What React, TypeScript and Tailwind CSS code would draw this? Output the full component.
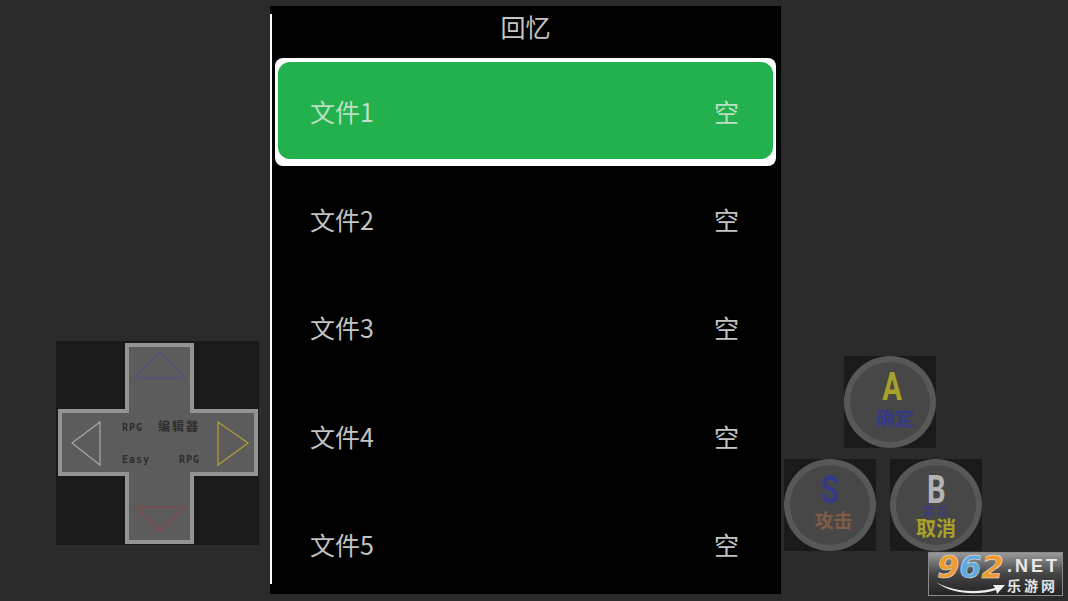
import React from 'react';

const cjk = "font-['Noto_Sans_CJK_SC','Noto_Sans',sans-serif]";

function Row(props: { name: string; selected?: boolean }) {
    if (props.selected) {
        return (
            <div className="h-[108px] shrink-0 ml-[3px] mr-[5px] bg-white rounded-[8px] pt-[4px] pb-[7px] px-[3px] flex">
                <div className="flex-1 bg-[#22b14c] rounded-[12px] flex items-center justify-between pl-[32px] pr-[34px] pt-[2px] text-[25px] text-[#bcdfc5]">
                    <span>{props.name}</span>
                    <span>空</span>
                </div>
            </div>
        );
    }
    return (
        <div className="h-[108.5px] shrink-0 flex items-center justify-between pl-[38px] pr-[42px] pb-[2px] text-[25px] text-[#c4c4c4]">
            <span>{props.name}</span>
            <span>空</span>
        </div>
    );
}

function Dpad() {
    return (
        <svg width="203" height="204" viewBox="0 0 203 204" className="block bg-[#1a1a1a]">
            <path
                d="M71 4 H136 V70 H200 V133 H136 V201 H71 V133 H4 V70 H71 Z"
                fill="#5c5c5c"
                stroke="#949494"
                strokeWidth="4"
            />
            <path d="M79 37 L104 11 L129 37 Z" fill="none" stroke="#4a5080" strokeWidth="1.2" />
            <path d="M80 166 L128 166 L104 190 Z" fill="none" stroke="#8a4044" strokeWidth="1.2" />
            <path d="M44 81 L44 124 L16 102 Z" fill="none" stroke="#a8a8a8" strokeWidth="1.2" />
            <path d="M162 81 L162 124 L192 102 Z" fill="none" stroke="#a89a38" strokeWidth="1.4" />
            <text x="66" y="90" fontFamily="'DejaVu Sans Mono', monospace" fontWeight="700" fontSize="10" fill="#2e2e2e" letterSpacing="1">RPG</text>
            <text x="102" y="90" fontFamily="'Noto Sans CJK SC', sans-serif" fontWeight="700" fontSize="12" fill="#2e2e2e" letterSpacing="2">编辑器</text>
            <text x="66" y="122" fontFamily="'DejaVu Sans Mono', monospace" fontWeight="700" fontSize="10" fill="#2e2e2e" letterSpacing="1">Easy</text>
            <text x="123" y="122" fontFamily="'DejaVu Sans Mono', monospace" fontWeight="700" fontSize="10" fill="#2e2e2e" letterSpacing="1">RPG</text>
        </svg>
    );
}

function RoundButton(props: { letter: string; letterClass: string; children: React.ReactNode }) {
    return (
        <div className="w-[92px] h-[92px] bg-[#1a1a1a]">
            <div className="w-[92px] h-[92px] rounded-full bg-[#585858] p-[6px]">
                <div className="w-[80px] h-[80px] rounded-full bg-[#474747] flex flex-col items-center">
                    <span className={"font-['Roboto',sans-serif] font-bold text-[39px] leading-[28px] mt-[11px] scale-x-75 " + props.letterClass}>
                        {props.letter}
                    </span>
                    {props.children}
                </div>
            </div>
        </div>
    );
}

function Logo() {
    return (
        <div className="absolute left-[928px] top-[552px] w-[135px] h-[44px] border border-[#8a8a8a] bg-gradient-to-b from-[#9a9a9a] via-[#444444] to-[#242424]">
            <div className="absolute left-[8px] top-[1px] flex font-['DejaVu_Sans',sans-serif] font-bold italic text-[32px] leading-[26px] [-webkit-text-stroke:0.5px_#e8e8e8]">
                <span className="text-[#ef9a2c]">9</span>
                <span className="text-[#5fa9df]">6</span>
                <span className="text-[#ef9a2c]">2</span>
            </div>
            <div className="absolute left-[78px] top-[3px] font-['Liberation_Sans',sans-serif] font-bold text-[18px] leading-[20px] tracking-[3px] text-[#e8e8e8]">.NET</div>
            <div className="absolute left-[78px] top-[23px] font-['Noto_Sans_CJK_SC',sans-serif] font-bold text-[14px] leading-[18px] tracking-[3px] text-[#e4e4e4]">乐游网</div>
            <svg width="72" height="16" viewBox="0 0 72 16" className="absolute left-[6px] top-[27px]">
                <path d="M1 2 C18 12 42 13 60 8 L58 5 L70 5 L62 14 L61 10 C42 16 16 14 1 2 Z" fill="#eeeeee" />
            </svg>
        </div>
    );
}

export default function App() {
    return (
        <div className={"relative w-[1068px] h-[601px] bg-[#2b2b2b] flex overflow-hidden " + cjk}>
            <div className="w-[270px] pl-[56px] pt-[341px]">
                <Dpad />
            </div>

            <div className="w-[511px] h-[588px] mt-[6px] bg-black flex overflow-hidden">
                <div className="w-[2px] mt-[8px] mb-[10px] bg-white" />
                <div className="flex-1 flex flex-col">
                    <div className="h-[52px] shrink-0 flex items-center justify-center text-[25px] text-[#c4c4c4] pb-[11px] pr-[2px]">回忆</div>
                    <Row name="文件1" selected />
                    <Row name="文件2" />
                    <Row name="文件3" />
                    <Row name="文件4" />
                    <Row name="文件5" />
                </div>
            </div>

            <div className="pl-[3px] pt-[356px] flex flex-col">
                <div className="pl-[60px]">
                    <RoundButton letter="A" letterClass="text-[#a8a028] ml-[4px]">
                        <span className="text-[19px] leading-[22px] font-bold text-[#343a85] mt-[6px] ml-[10px]">确定</span>
                    </RoundButton>
                </div>
                <div className="flex gap-[14px] mt-[11px]">
                    <RoundButton letter="S" letterClass="text-[#343a85]">
                        <span className="text-[19px] leading-[22px] font-bold text-[#7f5c46] mt-[5px] ml-[7px]">攻击</span>
                    </RoundButton>
                    <RoundButton letter="B" letterClass="text-[#b4b4b4]">
                        <span className="text-[12px] leading-[10px] tracking-[1px] text-[#343a85] mt-[2px]">菜单</span>
                        <span className="text-[20px] leading-[20px] font-bold text-[#a8a028] mt-[2px]">取消</span>
                    </RoundButton>
                </div>
            </div>

            <Logo />
        </div>
    );
}
